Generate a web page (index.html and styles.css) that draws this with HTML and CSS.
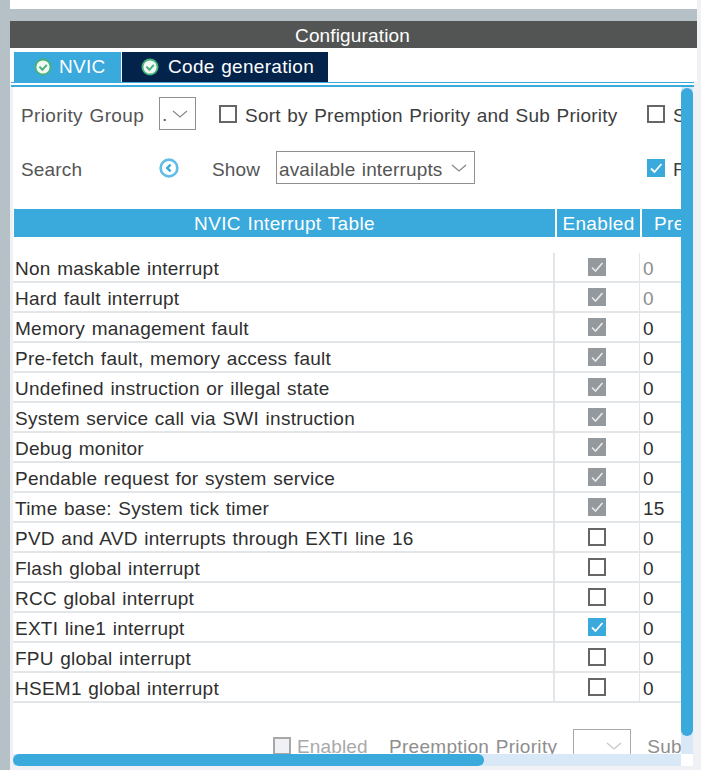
FILE: index.html
```html
<!DOCTYPE html>
<html>
<head>
  <title>Configuration</title>
  <link rel="stylesheet" href="styles.css">
</head>
<body>
  <div class="rail"></div>
  <div class="panel">
    <div class="top-strip"></div>
    <div class="band"></div>
    <div class="title">Configuration</div>
    <div class="tabs">
      <div class="tab tab-on">
        <svg class="ok" viewBox="0 0 18 18"><circle cx="9" cy="9" r="8.5" fill="#45b27a"/><circle cx="9" cy="9" r="6.6" fill="#f2f9f5"/><path d="M5.4 8.6l3 3.2 4.4-5" fill="none" stroke="#45b27a" stroke-width="2"/></svg>
        NVIC
      </div>
      <div class="tab tab-off">
        <svg class="ok ok-code" viewBox="0 0 18 18"><circle cx="9" cy="9" r="8.5" fill="#45b27a"/><circle cx="9" cy="9" r="6.6" fill="#f2f9f5"/><path d="M5.4 8.6l3 3.2 4.4-5" fill="none" stroke="#45b27a" stroke-width="2"/></svg>
        Code generation
      </div>
    </div>
    <div class="rule"></div>

    <div class="work">
      <div class="view">
        <div class="tools tools-first">
          <span class="label label-group">Priority Group</span>
          <span class="select select-small"><span class="dot">.</span><svg class="chev" viewBox="0 0 16 8"><path d="M1 1l7 6 7-6" fill="none" stroke="#8a8a8a" stroke-width="1.3"/></svg></span>
          <span class="box box-sort"></span>
          <span class="label-dark label-sort">Sort by Premption Priority and Sub Priority</span>
          <span class="box"></span>
          <span class="label-dark label-cut">S</span>
        </div>
        <div class="tools tools-second">
          <span class="label label-search">Search</span>
          <svg class="search-icon" viewBox="0 0 20 20"><circle cx="10" cy="10" r="8.4" fill="#fff" stroke="#62bce6" stroke-width="2.6"/><path d="M11.6 6.6L8.2 10l3.4 3.4" fill="none" stroke="#3aa9dc" stroke-width="2.4"/></svg>
          <span class="label label-show">Show</span>
          <span class="select select-wide"><span class="select-text">available interrupts</span><svg class="chev" viewBox="0 0 16 8"><path d="M1 1l7 6 7-6" fill="none" stroke="#8a8a8a" stroke-width="1.3"/></svg></span>
          <span class="box box-on box-filter"><svg viewBox="0 0 18 18"><path d="M4 9.5l3.5 3.5 7-8" fill="none" stroke="#fff" stroke-width="1.8"/></svg></span>
          <span class="label-dark label-cut">F</span>
        </div>

        <div class="thead">
          <div class="th th-name">NVIC Interrupt Table</div>
          <div class="th th-on">Enabled</div>
          <div class="th th-pre">Preemption</div>
        </div>

        <div class="tbody">
          <div class="row"><div class="c-name">Non maskable interrupt</div><div class="c-on"><span class="box box-off"><svg viewBox="0 0 18 18"><path d="M4 9.5l3.5 3.5 7-8" fill="none" stroke="#e8eaeb" stroke-width="1.6"/></svg></span></div><div class="c-pre muted">0</div></div>
          <div class="row"><div class="c-name">Hard fault interrupt</div><div class="c-on"><span class="box box-off"><svg viewBox="0 0 18 18"><path d="M4 9.5l3.5 3.5 7-8" fill="none" stroke="#e8eaeb" stroke-width="1.6"/></svg></span></div><div class="c-pre muted">0</div></div>
          <div class="row"><div class="c-name">Memory management fault</div><div class="c-on"><span class="box box-off"><svg viewBox="0 0 18 18"><path d="M4 9.5l3.5 3.5 7-8" fill="none" stroke="#e8eaeb" stroke-width="1.6"/></svg></span></div><div class="c-pre">0</div></div>
          <div class="row"><div class="c-name">Pre-fetch fault, memory access fault</div><div class="c-on"><span class="box box-off"><svg viewBox="0 0 18 18"><path d="M4 9.5l3.5 3.5 7-8" fill="none" stroke="#e8eaeb" stroke-width="1.6"/></svg></span></div><div class="c-pre">0</div></div>
          <div class="row"><div class="c-name">Undefined instruction or illegal state</div><div class="c-on"><span class="box box-off"><svg viewBox="0 0 18 18"><path d="M4 9.5l3.5 3.5 7-8" fill="none" stroke="#e8eaeb" stroke-width="1.6"/></svg></span></div><div class="c-pre">0</div></div>
          <div class="row"><div class="c-name">System service call via SWI instruction</div><div class="c-on"><span class="box box-off"><svg viewBox="0 0 18 18"><path d="M4 9.5l3.5 3.5 7-8" fill="none" stroke="#e8eaeb" stroke-width="1.6"/></svg></span></div><div class="c-pre">0</div></div>
          <div class="row"><div class="c-name">Debug monitor</div><div class="c-on"><span class="box box-off"><svg viewBox="0 0 18 18"><path d="M4 9.5l3.5 3.5 7-8" fill="none" stroke="#e8eaeb" stroke-width="1.6"/></svg></span></div><div class="c-pre">0</div></div>
          <div class="row"><div class="c-name">Pendable request for system service</div><div class="c-on"><span class="box box-off"><svg viewBox="0 0 18 18"><path d="M4 9.5l3.5 3.5 7-8" fill="none" stroke="#e8eaeb" stroke-width="1.6"/></svg></span></div><div class="c-pre">0</div></div>
          <div class="row"><div class="c-name">Time base: System tick timer</div><div class="c-on"><span class="box box-off"><svg viewBox="0 0 18 18"><path d="M4 9.5l3.5 3.5 7-8" fill="none" stroke="#e8eaeb" stroke-width="1.6"/></svg></span></div><div class="c-pre">15</div></div>
          <div class="row"><div class="c-name">PVD and AVD interrupts through EXTI line 16</div><div class="c-on"><span class="box"></span></div><div class="c-pre">0</div></div>
          <div class="row"><div class="c-name">Flash global interrupt</div><div class="c-on"><span class="box"></span></div><div class="c-pre">0</div></div>
          <div class="row"><div class="c-name">RCC global interrupt</div><div class="c-on"><span class="box"></span></div><div class="c-pre">0</div></div>
          <div class="row"><div class="c-name">EXTI line1 interrupt</div><div class="c-on"><span class="box box-on"><svg viewBox="0 0 18 18"><path d="M4 9.5l3.5 3.5 7-8" fill="none" stroke="#fff" stroke-width="1.8"/></svg></span></div><div class="c-pre">0</div></div>
          <div class="row"><div class="c-name">FPU global interrupt</div><div class="c-on"><span class="box"></span></div><div class="c-pre">0</div></div>
          <div class="row"><div class="c-name">HSEM1 global interrupt</div><div class="c-on"><span class="box"></span></div><div class="c-pre">0</div></div>
        </div>

        <div class="tools tools-last">
          <span class="box box-dim"></span>
          <span class="dim dim-enabled">Enabled</span>
          <span class="dim-dark">Preemption Priority</span>
          <span class="select select-dim"><svg class="chev" viewBox="0 0 16 8"><path d="M1 1l7 6 7-6" fill="none" stroke="#c4c8cb" stroke-width="1.3"/></svg></span>
          <span class="dim-dark dim-sub">Sub Priority</span>
        </div>
      </div>

      <div class="vbar"><div class="vthumb"></div></div>
      <div class="hbar"><div class="hthumb"></div></div>
      <div class="corner"></div>
    </div>
  </div>
</body>
</html>
```

FILE: styles.css
```css
* {
  margin: 0;
  padding: 0;
  box-sizing: border-box;
}

body {
  font-family: "Liberation Sans", Arial, sans-serif;
  font-size: 19px;
  letter-spacing: 0.15px;
  word-spacing: 1px;
  color: #333;
  background-color: #eff1f4;
  display: flex;
  height: 770px;
  overflow: hidden;
}

.rail {
  width: 10px;
  background-color: #b6c1c7;
}

.panel {
  width: 687px;
}

.top-strip {
  height: 9px;
  background-color: white;
}

.band {
  height: 12px;
  background-color: #b6c1c7;
}

.title {
  height: 27px;
  padding-right: 2px;
  line-height: 29px;
  text-align: center;
  color: white;
  background-color: #535554;
}

.tabs {
  display: flex;
  gap: 1px;
  height: 34px;
  padding: 4px 0 0 4px;
  background-color: white;
}

.tab {
  display: flex;
  align-items: center;
  height: 30px;
  color: white;
  font-size: 19px;
  letter-spacing: 0.3px;
}

.tab-on {
  width: 107px;
  padding-left: 20px;
  background-color: #3aa9dc;
}

.tab-off {
  width: 206px;
  padding-left: 19px;
  background-color: #03234b;
}

.ok {
  width: 18px;
  height: 18px;
  margin-right: 7px;
}

.ok-code {
  margin-right: 9px;
}

.rule {
  height: 5px;
  background-color: white;
  border-top: 1px solid #3aa9dc;
  border-bottom: 2px solid #3aa9dc;
  margin-left: 1px;
  margin-right: 3px;
}

.work {
  display: grid;
  grid-template-columns: 668px 12px;
  grid-template-rows: 667px 12px;
  width: 680px;
  margin-left: 3px;
  background-color: white;
}

.view {
  overflow: hidden;
  position: relative;
  white-space: nowrap;
}

.vbar {
  background-color: #d8e8f6;
  padding-top: 1px;
}

.vthumb {
  height: 648px;
  background-color: #3aa9dc;
  border-radius: 6px;
}

.hbar {
  background-color: #d8e8f6;
}

.hthumb {
  width: 471px;
  height: 12px;
  background-color: #3aa9dc;
  border-radius: 6px;
}

.corner {
  background-color: white;
}

.tools {
  display: flex;
  align-items: center;
  height: 33px;
}

.tools > * {
  flex: none;
}

.tools-first {
  margin-top: 10px;
  padding-left: 8px;
}

.tools-second {
  margin-top: 21px;
  padding-left: 8px;
}

.label {
  color: #555;
  padding-top: 4px;
}

.label-group {
  width: 138px;
  letter-spacing: 0.35px;
}

.label-search {
  width: 138px;
}

.label-show {
  margin-left: 33px;
  width: 64px;
}

.label-dark {
  color: #3d3d3d;
  padding-top: 4px;
}

.label-sort {
  width: 402px;
  margin-left: 8px;
  letter-spacing: 0.22px;
}

.label-cut {
  margin-left: 8px;
}

.select {
  display: flex;
  align-items: center;
  justify-content: space-between;
  height: 33px;
  padding: 0 7px 0 2px;
  border: 1px solid #8f8f8f;
  color: #555;
}

.select-text {
  padding-top: 4px;
}

.dot {
  padding-top: 2px;
}

.select-small {
  width: 37px;
}

.select-wide {
  width: 199px;
}

.select-dim {
  width: 58px;
  margin-left: 16px;
  padding-right: 8px;
  justify-content: flex-end;
  border-color: #a9a9a9;
}

.chev {
  width: 16px;
  height: 8px;
}

.search-icon {
  width: 20px;
  height: 20px;
}

.box {
  display: inline-block;
  flex: none;
  width: 18px;
  height: 18px;
  border: 2px solid #666;
  background-color: white;
}

.box svg {
  display: block;
  width: 18px;
  height: 18px;
}

.box-sort {
  margin-left: 23px;
}

.box-on {
  border: none;
  background-color: #3aa9dc;
}

.box-off {
  border: none;
  background-color: #94999d;
}

.box-filter {
  margin-left: 172px;
}

.box-dim {
  border-color: #a8a8a8;
  background-color: #eff1f4;
}

.thead {
  display: flex;
  height: 28px;
  margin-top: 25px;
  margin-left: 1px;
  color: white;
  text-align: center;
  line-height: 30px;
  letter-spacing: 0.35px;
  overflow: hidden;
}

.th {
  background-color: #3aa9dc;
  flex: none;
}

.th-name {
  width: 541px;
}

.th-on {
  width: 83px;
  margin-left: 2px;
}

.th-pre {
  width: 120px;
  margin-left: 2px;
  text-align: left;
  padding-left: 12px;
}

.tbody {
  margin-top: 16px;
}

.row {
  display: flex;
  height: 30px;
  border-bottom: 2px solid #e3e6e9;
}

.c-name {
  width: 542px;
  padding-left: 2px;
  line-height: 32px;
  letter-spacing: 0.25px;
  border-right: 2px solid #e3e6e9;
  color: #2f2f2f;
}

.c-on {
  display: flex;
  align-items: center;
  justify-content: center;
  width: 85px;
  border-right: 1px solid #e3e6e9;
}

.c-pre {
  padding-left: 3px;
  line-height: 32px;
  color: #2f2f2f;
}

.muted {
  color: #8e8e8e;
}

.tools-last {
  margin-top: 26px;
  padding-left: 260px;
}

.dim {
  color: #a9a9a9;
  padding-top: 2px;
}

.dim-enabled {
  margin-left: 6px;
  width: 92px;
}

.dim-dark {
  color: #8e8e8e;
  padding-top: 2px;
  letter-spacing: 0.3px;
}

.dim-sub {
  margin-left: 16px;
}
```
